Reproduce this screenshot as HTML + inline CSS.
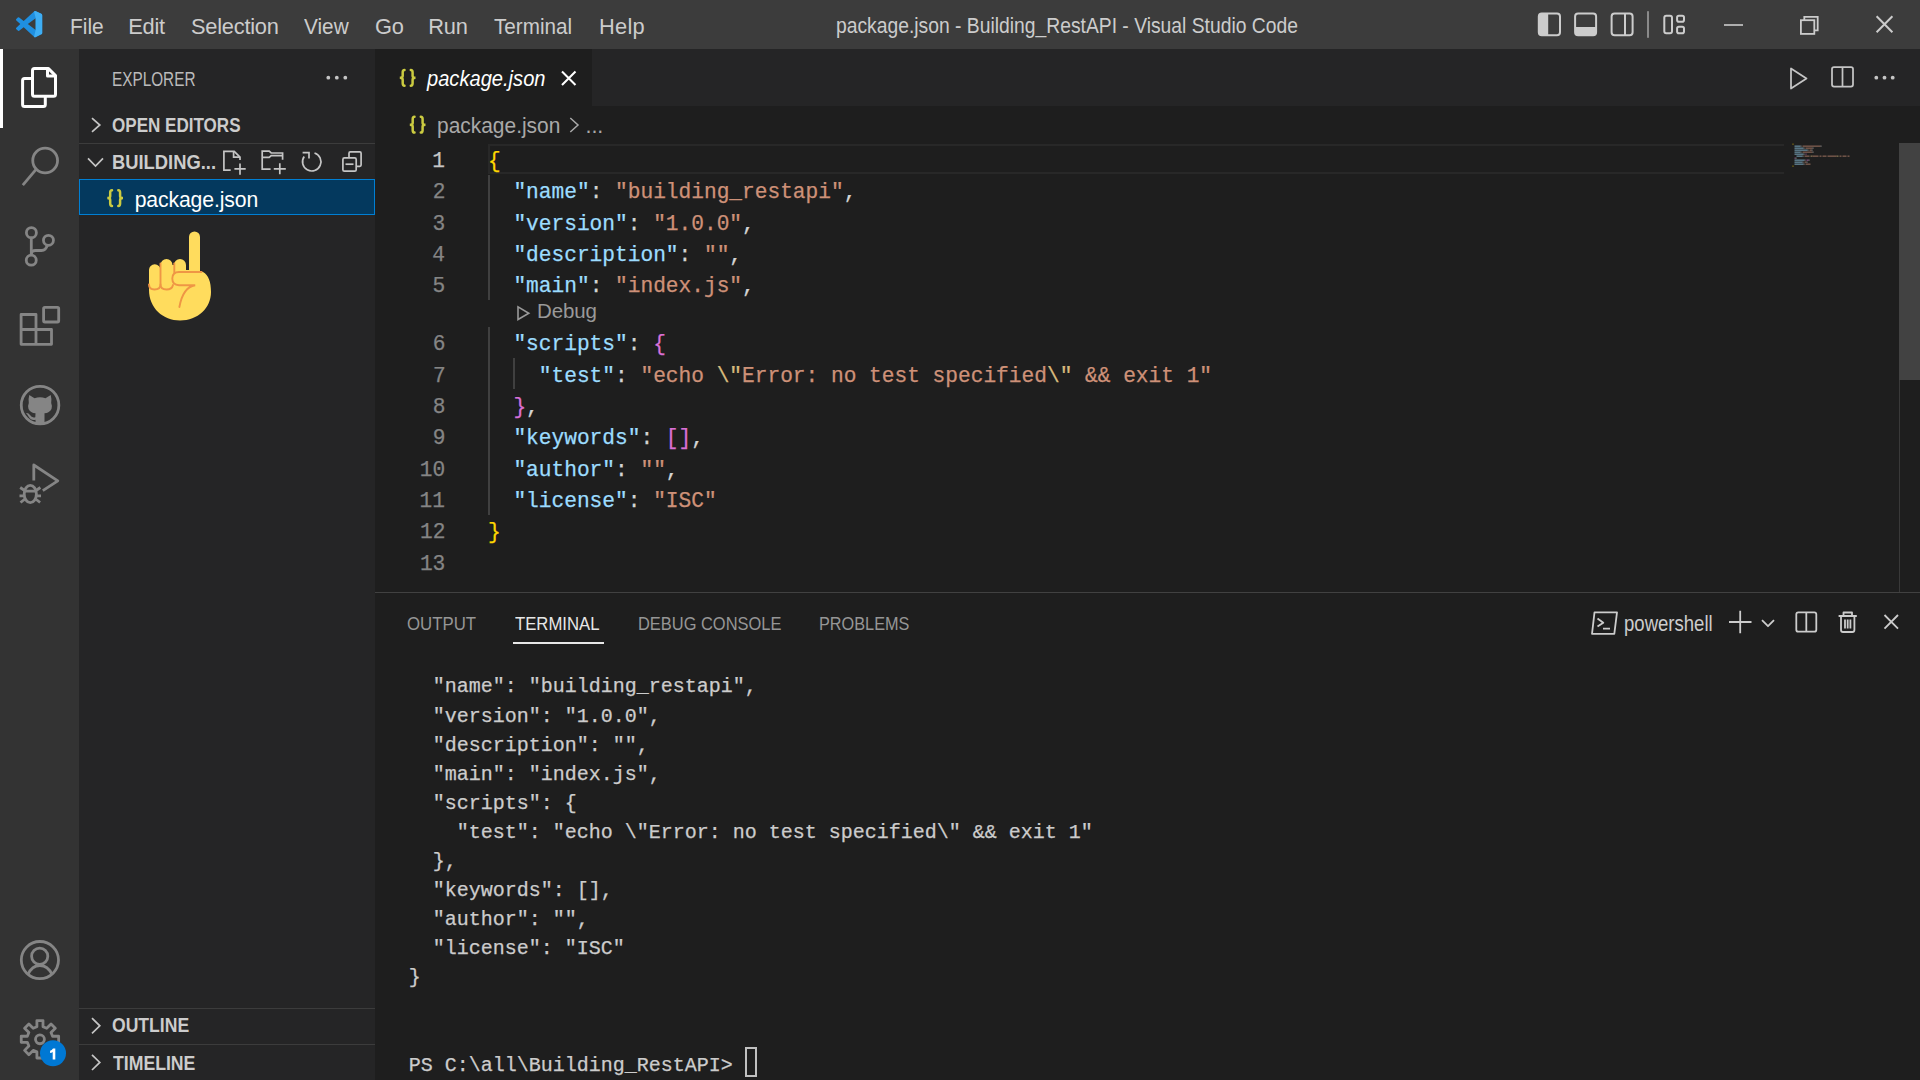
<!DOCTYPE html>
<html><head><meta charset="utf-8"><title>VS Code</title>
<style>
html,body{margin:0;padding:0;width:1920px;height:1080px;overflow:hidden;background:#1e1e1e;font-family:'Liberation Sans', sans-serif;}
</style></head><body>
<div style="position:absolute;left:0px;top:0px;width:1920px;height:49px;background:#3c3c3c;"></div>
<div style="position:absolute;left:0px;top:49px;width:79px;height:1031px;background:#333333;"></div>
<div style="position:absolute;left:79px;top:49px;width:296px;height:1031px;background:#252526;"></div>
<div style="position:absolute;left:375px;top:49px;width:1545px;height:57px;background:#252526;"></div>
<div style="position:absolute;left:375px;top:49px;width:217px;height:57px;background:#1e1e1e;"></div>
<div style="position:absolute;left:375px;top:106px;width:1545px;height:486px;background:#1e1e1e;"></div>
<div style="position:absolute;left:375px;top:592px;width:1545px;height:488px;background:#1e1e1e;"></div>
<div style="position:absolute;left:375px;top:592px;width:1545px;height:1px;background:#414141;"></div>
<div style="position:absolute;left:0px;top:49px;width:3px;height:79px;background:#ffffff;"></div>
<div style="position:absolute;left:79px;top:143px;width:296px;height:1px;background:#3c3c3c;"></div>
<div style="position:absolute;left:79px;top:1008px;width:296px;height:1px;background:#3c3c3c;"></div>
<div style="position:absolute;left:79px;top:1044px;width:296px;height:1px;background:#3c3c3c;"></div>
<div style="position:absolute;left:79px;top:179px;width:296px;height:36px;box-sizing:border-box;background:#04395e;border:1px solid #007fd4"></div>
<div style="position:absolute;left:488px;top:144px;width:1296px;height:30px;box-sizing:border-box;border:2px solid #282828;border-right:none"></div>
<div style="position:absolute;left:1899px;top:143px;width:1px;height:449px;background:#393939;"></div>
<div style="position:absolute;left:1899px;top:143px;width:21px;height:237px;background:#424242;"></div>
<div style="position:absolute;left:69.79px;top:12px;font-family:'Liberation Sans', sans-serif;font-size:21.8px;line-height:29px;letter-spacing:0.000px;color:#cccccc;white-space:pre;transform:scaleX(0.9577);transform-origin:0 0;">File</div>
<div style="position:absolute;left:128.21px;top:12px;font-family:'Liberation Sans', sans-serif;font-size:21.8px;line-height:29px;letter-spacing:-0.206px;color:#cccccc;white-space:pre;">Edit</div>
<div style="position:absolute;left:191.01px;top:12px;font-family:'Liberation Sans', sans-serif;font-size:21.8px;line-height:29px;letter-spacing:-0.222px;color:#cccccc;white-space:pre;">Selection</div>
<div style="position:absolute;left:304.41px;top:12px;font-family:'Liberation Sans', sans-serif;font-size:21.8px;line-height:29px;letter-spacing:0.000px;color:#cccccc;white-space:pre;transform:scaleX(0.9532);transform-origin:0 0;">View</div>
<div style="position:absolute;left:374.90px;top:12px;font-family:'Liberation Sans', sans-serif;font-size:21.8px;line-height:29px;letter-spacing:-0.069px;color:#cccccc;white-space:pre;">Go</div>
<div style="position:absolute;left:428.21px;top:12px;font-family:'Liberation Sans', sans-serif;font-size:21.8px;line-height:29px;letter-spacing:-0.144px;color:#cccccc;white-space:pre;">Run</div>
<div style="position:absolute;left:493.54px;top:12px;font-family:'Liberation Sans', sans-serif;font-size:21.8px;line-height:29px;letter-spacing:0.000px;color:#cccccc;white-space:pre;transform:scaleX(0.9475);transform-origin:0 0;">Terminal</div>
<div style="position:absolute;left:598.96px;top:12px;font-family:'Liberation Sans', sans-serif;font-size:21.8px;line-height:29px;letter-spacing:0.290px;color:#cccccc;white-space:pre;">Help</div>
<div style="position:absolute;left:836.46px;top:11px;font-family:'Liberation Sans', sans-serif;font-size:21.8px;line-height:29px;letter-spacing:0.000px;color:#cccccc;white-space:pre;transform:scaleX(0.8852);transform-origin:0 0;">package.json - Building_RestAPI - Visual Studio Code</div>
<div style="position:absolute;left:111.74px;top:66px;font-family:'Liberation Sans', sans-serif;font-size:19.6px;line-height:26px;letter-spacing:0.000px;color:#bbbbbb;white-space:pre;transform:scaleX(0.7819);transform-origin:0 0;">EXPLORER</div>
<div style="position:absolute;left:112.30px;top:112px;font-family:'Liberation Sans', sans-serif;font-size:20px;line-height:26px;letter-spacing:0.000px;color:#cccccc;white-space:pre;font-weight:bold;transform:scaleX(0.8527);transform-origin:0 0;">OPEN EDITORS</div>
<div style="position:absolute;left:111.77px;top:149px;font-family:'Liberation Sans', sans-serif;font-size:20px;line-height:26px;letter-spacing:0.000px;color:#cccccc;white-space:pre;font-weight:bold;transform:scaleX(0.9176);transform-origin:0 0;">BUILDING...</div>
<div style="position:absolute;left:134.63px;top:186px;font-family:'Liberation Sans', sans-serif;font-size:21.2px;line-height:28px;letter-spacing:-0.108px;color:#ffffff;white-space:pre;">package.json</div>
<div style="position:absolute;left:112.28px;top:1012px;font-family:'Liberation Sans', sans-serif;font-size:20px;line-height:26px;letter-spacing:0.000px;color:#cccccc;white-space:pre;font-weight:bold;transform:scaleX(0.8791);transform-origin:0 0;">OUTLINE</div>
<div style="position:absolute;left:112.80px;top:1050px;font-family:'Liberation Sans', sans-serif;font-size:20px;line-height:26px;letter-spacing:0.000px;color:#cccccc;white-space:pre;font-weight:bold;transform:scaleX(0.8828);transform-origin:0 0;">TIMELINE</div>
<div style="position:absolute;left:427.40px;top:64px;font-family:'Liberation Sans', sans-serif;font-size:21.8px;line-height:29px;letter-spacing:0.000px;color:#ffffff;white-space:pre;font-style:italic;transform:scaleX(0.9225);transform-origin:0 0;">package.json</div>
<div style="position:absolute;left:437.40px;top:112px;font-family:'Liberation Sans', sans-serif;font-size:21.5px;line-height:28px;letter-spacing:0.000px;color:#a9a9a9;white-space:pre;transform:scaleX(0.9736);transform-origin:0 0;">package.json</div>
<div style="position:absolute;left:585.54px;top:112px;font-family:'Liberation Sans', sans-serif;font-size:21.5px;line-height:28px;letter-spacing:-0.122px;color:#a9a9a9;white-space:pre;">...</div>
<div style="position:absolute;left:488.0px;top:147px;font-family:'Liberation Mono', monospace;font-size:21.2px;line-height:28px;letter-spacing:-0.012px;white-space:pre;-webkit-text-stroke:0.25px currentColor;"><span style="color:#ffd700">{</span></div>
<div style="position:absolute;left:432.3px;top:147px;font-family:'Liberation Mono', monospace;font-size:21.2px;line-height:28px;letter-spacing:-0.012px;white-space:pre;-webkit-text-stroke:0.25px currentColor;"><span style="color:#c6c6c6">1</span></div>
<div style="position:absolute;left:488.0px;top:178px;font-family:'Liberation Mono', monospace;font-size:21.2px;line-height:28px;letter-spacing:-0.012px;white-space:pre;-webkit-text-stroke:0.25px currentColor;"><span style="color:#d4d4d4">  </span><span style="color:#9cdcfe">&quot;name&quot;</span><span style="color:#d4d4d4">: </span><span style="color:#ce9178">&quot;building_restapi&quot;</span><span style="color:#d4d4d4">,</span></div>
<div style="position:absolute;left:432.78px;top:178px;font-family:'Liberation Mono', monospace;font-size:21.2px;line-height:28px;letter-spacing:-0.012px;white-space:pre;-webkit-text-stroke:0.25px currentColor;"><span style="color:#858585">2</span></div>
<div style="position:absolute;left:488.0px;top:210px;font-family:'Liberation Mono', monospace;font-size:21.2px;line-height:28px;letter-spacing:-0.012px;white-space:pre;-webkit-text-stroke:0.25px currentColor;"><span style="color:#d4d4d4">  </span><span style="color:#9cdcfe">&quot;version&quot;</span><span style="color:#d4d4d4">: </span><span style="color:#ce9178">&quot;1.0.0&quot;</span><span style="color:#d4d4d4">,</span></div>
<div style="position:absolute;left:432.62px;top:210px;font-family:'Liberation Mono', monospace;font-size:21.2px;line-height:28px;letter-spacing:-0.012px;white-space:pre;-webkit-text-stroke:0.25px currentColor;"><span style="color:#858585">3</span></div>
<div style="position:absolute;left:488.0px;top:241px;font-family:'Liberation Mono', monospace;font-size:21.2px;line-height:28px;letter-spacing:-0.012px;white-space:pre;-webkit-text-stroke:0.25px currentColor;"><span style="color:#d4d4d4">  </span><span style="color:#9cdcfe">&quot;description&quot;</span><span style="color:#d4d4d4">: </span><span style="color:#ce9178">&quot;&quot;</span><span style="color:#d4d4d4">,</span></div>
<div style="position:absolute;left:432.35px;top:241px;font-family:'Liberation Mono', monospace;font-size:21.2px;line-height:28px;letter-spacing:-0.012px;white-space:pre;-webkit-text-stroke:0.25px currentColor;"><span style="color:#858585">4</span></div>
<div style="position:absolute;left:488.0px;top:272px;font-family:'Liberation Mono', monospace;font-size:21.2px;line-height:28px;letter-spacing:-0.012px;white-space:pre;-webkit-text-stroke:0.25px currentColor;"><span style="color:#d4d4d4">  </span><span style="color:#9cdcfe">&quot;main&quot;</span><span style="color:#d4d4d4">: </span><span style="color:#ce9178">&quot;index.js&quot;</span><span style="color:#d4d4d4">,</span></div>
<div style="position:absolute;left:432.62px;top:272px;font-family:'Liberation Mono', monospace;font-size:21.2px;line-height:28px;letter-spacing:-0.012px;white-space:pre;-webkit-text-stroke:0.25px currentColor;"><span style="color:#858585">5</span></div>
<div style="position:absolute;left:488.0px;top:330px;font-family:'Liberation Mono', monospace;font-size:21.2px;line-height:28px;letter-spacing:-0.012px;white-space:pre;-webkit-text-stroke:0.25px currentColor;"><span style="color:#d4d4d4">  </span><span style="color:#9cdcfe">&quot;scripts&quot;</span><span style="color:#d4d4d4">: </span><span style="color:#da70d6">{</span></div>
<div style="position:absolute;left:432.65px;top:330px;font-family:'Liberation Mono', monospace;font-size:21.2px;line-height:28px;letter-spacing:-0.012px;white-space:pre;-webkit-text-stroke:0.25px currentColor;"><span style="color:#858585">6</span></div>
<div style="position:absolute;left:488.0px;top:362px;font-family:'Liberation Mono', monospace;font-size:21.2px;line-height:28px;letter-spacing:-0.012px;white-space:pre;-webkit-text-stroke:0.25px currentColor;"><span style="color:#d4d4d4">    </span><span style="color:#9cdcfe">&quot;test&quot;</span><span style="color:#d4d4d4">: </span><span style="color:#ce9178">&quot;echo </span><span style="color:#d7ba7d">\&quot;</span><span style="color:#ce9178">Error: no test specified</span><span style="color:#d7ba7d">\&quot;</span><span style="color:#ce9178"> &amp;&amp; exit 1&quot;</span></div>
<div style="position:absolute;left:432.93px;top:362px;font-family:'Liberation Mono', monospace;font-size:21.2px;line-height:28px;letter-spacing:-0.012px;white-space:pre;-webkit-text-stroke:0.25px currentColor;"><span style="color:#858585">7</span></div>
<div style="position:absolute;left:488.0px;top:393px;font-family:'Liberation Mono', monospace;font-size:21.2px;line-height:28px;letter-spacing:-0.012px;white-space:pre;-webkit-text-stroke:0.25px currentColor;"><span style="color:#d4d4d4">  </span><span style="color:#da70d6">}</span><span style="color:#d4d4d4">,</span></div>
<div style="position:absolute;left:432.68px;top:393px;font-family:'Liberation Mono', monospace;font-size:21.2px;line-height:28px;letter-spacing:-0.012px;white-space:pre;-webkit-text-stroke:0.25px currentColor;"><span style="color:#858585">8</span></div>
<div style="position:absolute;left:488.0px;top:424px;font-family:'Liberation Mono', monospace;font-size:21.2px;line-height:28px;letter-spacing:-0.012px;white-space:pre;-webkit-text-stroke:0.25px currentColor;"><span style="color:#d4d4d4">  </span><span style="color:#9cdcfe">&quot;keywords&quot;</span><span style="color:#d4d4d4">: </span><span style="color:#da70d6">[]</span><span style="color:#d4d4d4">,</span></div>
<div style="position:absolute;left:432.75px;top:424px;font-family:'Liberation Mono', monospace;font-size:21.2px;line-height:28px;letter-spacing:-0.012px;white-space:pre;-webkit-text-stroke:0.25px currentColor;"><span style="color:#858585">9</span></div>
<div style="position:absolute;left:488.0px;top:456px;font-family:'Liberation Mono', monospace;font-size:21.2px;line-height:28px;letter-spacing:-0.012px;white-space:pre;-webkit-text-stroke:0.25px currentColor;"><span style="color:#d4d4d4">  </span><span style="color:#9cdcfe">&quot;author&quot;</span><span style="color:#d4d4d4">: </span><span style="color:#ce9178">&quot;&quot;</span><span style="color:#d4d4d4">,</span></div>
<div style="position:absolute;left:419.87px;top:456px;font-family:'Liberation Mono', monospace;font-size:21.2px;line-height:28px;letter-spacing:-0.012px;white-space:pre;-webkit-text-stroke:0.25px currentColor;"><span style="color:#858585">10</span></div>
<div style="position:absolute;left:488.0px;top:487px;font-family:'Liberation Mono', monospace;font-size:21.2px;line-height:28px;letter-spacing:-0.012px;white-space:pre;-webkit-text-stroke:0.25px currentColor;"><span style="color:#d4d4d4">  </span><span style="color:#9cdcfe">&quot;license&quot;</span><span style="color:#d4d4d4">: </span><span style="color:#ce9178">&quot;ISC&quot;</span></div>
<div style="position:absolute;left:419.59px;top:487px;font-family:'Liberation Mono', monospace;font-size:21.2px;line-height:28px;letter-spacing:-0.012px;white-space:pre;-webkit-text-stroke:0.25px currentColor;"><span style="color:#858585">11</span></div>
<div style="position:absolute;left:488.0px;top:518px;font-family:'Liberation Mono', monospace;font-size:21.2px;line-height:28px;letter-spacing:-0.012px;white-space:pre;-webkit-text-stroke:0.25px currentColor;"><span style="color:#ffd700">}</span></div>
<div style="position:absolute;left:420.07px;top:518px;font-family:'Liberation Mono', monospace;font-size:21.2px;line-height:28px;letter-spacing:-0.012px;white-space:pre;-webkit-text-stroke:0.25px currentColor;"><span style="color:#858585">12</span></div>
<div style="position:absolute;left:419.91px;top:550px;font-family:'Liberation Mono', monospace;font-size:21.2px;line-height:28px;letter-spacing:-0.012px;white-space:pre;-webkit-text-stroke:0.25px currentColor;"><span style="color:#858585">13</span></div>
<svg width="1920" height="1080" style="position:absolute;left:0;top:0;opacity:0.45"><rect x="1792.5" y="143.4" width="1" height="1.6" fill="#ffd700"/><rect x="1794.5" y="145.4" width="6" height="1.6" fill="#9cdcfe"/><rect x="1800.5" y="145.4" width="1" height="1.6" fill="#d4d4d4"/><rect x="1802.5" y="145.4" width="18" height="1.6" fill="#ce9178"/><rect x="1820.5" y="145.4" width="1" height="1.6" fill="#d4d4d4"/><rect x="1794.5" y="147.4" width="9" height="1.6" fill="#9cdcfe"/><rect x="1803.5" y="147.4" width="1" height="1.6" fill="#d4d4d4"/><rect x="1805.5" y="147.4" width="7" height="1.6" fill="#ce9178"/><rect x="1812.5" y="147.4" width="1" height="1.6" fill="#d4d4d4"/><rect x="1794.5" y="149.4" width="13" height="1.6" fill="#9cdcfe"/><rect x="1807.5" y="149.4" width="1" height="1.6" fill="#d4d4d4"/><rect x="1809.5" y="149.4" width="2" height="1.6" fill="#ce9178"/><rect x="1811.5" y="149.4" width="1" height="1.6" fill="#d4d4d4"/><rect x="1794.5" y="151.4" width="6" height="1.6" fill="#9cdcfe"/><rect x="1800.5" y="151.4" width="1" height="1.6" fill="#d4d4d4"/><rect x="1802.5" y="151.4" width="10" height="1.6" fill="#ce9178"/><rect x="1812.5" y="151.4" width="1" height="1.6" fill="#d4d4d4"/><rect x="1794.5" y="153.4" width="9" height="1.6" fill="#9cdcfe"/><rect x="1803.5" y="153.4" width="1" height="1.6" fill="#d4d4d4"/><rect x="1805.5" y="153.4" width="1" height="1.6" fill="#da70d6"/><rect x="1796.5" y="155.4" width="6" height="1.6" fill="#9cdcfe"/><rect x="1802.5" y="155.4" width="1" height="1.6" fill="#d4d4d4"/><rect x="1804.5" y="155.4" width="5" height="1.6" fill="#ce9178"/><rect x="1810.5" y="155.4" width="2" height="1.6" fill="#d7ba7d"/><rect x="1812.5" y="155.4" width="6" height="1.6" fill="#ce9178"/><rect x="1819.5" y="155.4" width="2" height="1.6" fill="#ce9178"/><rect x="1822.5" y="155.4" width="4" height="1.6" fill="#ce9178"/><rect x="1827.5" y="155.4" width="9" height="1.6" fill="#ce9178"/><rect x="1836.5" y="155.4" width="2" height="1.6" fill="#d7ba7d"/><rect x="1839.5" y="155.4" width="2" height="1.6" fill="#ce9178"/><rect x="1842.5" y="155.4" width="4" height="1.6" fill="#ce9178"/><rect x="1847.5" y="155.4" width="2" height="1.6" fill="#ce9178"/><rect x="1794.5" y="157.4" width="1" height="1.6" fill="#da70d6"/><rect x="1795.5" y="157.4" width="1" height="1.6" fill="#d4d4d4"/><rect x="1794.5" y="159.4" width="10" height="1.6" fill="#9cdcfe"/><rect x="1804.5" y="159.4" width="1" height="1.6" fill="#d4d4d4"/><rect x="1806.5" y="159.4" width="2" height="1.6" fill="#da70d6"/><rect x="1808.5" y="159.4" width="1" height="1.6" fill="#d4d4d4"/><rect x="1794.5" y="161.4" width="8" height="1.6" fill="#9cdcfe"/><rect x="1802.5" y="161.4" width="1" height="1.6" fill="#d4d4d4"/><rect x="1804.5" y="161.4" width="2" height="1.6" fill="#ce9178"/><rect x="1806.5" y="161.4" width="1" height="1.6" fill="#d4d4d4"/><rect x="1794.5" y="163.4" width="9" height="1.6" fill="#9cdcfe"/><rect x="1803.5" y="163.4" width="1" height="1.6" fill="#d4d4d4"/><rect x="1805.5" y="163.4" width="5" height="1.6" fill="#ce9178"/><rect x="1792.5" y="165.4" width="1" height="1.6" fill="#ffd700"/></svg>
<div style="position:absolute;left:488px;top:175px;width:1.5px;height:125px;background:#404040;"></div>
<div style="position:absolute;left:488px;top:327px;width:1.5px;height:188px;background:#404040;"></div>
<div style="position:absolute;left:513px;top:358px;width:1.5px;height:31px;background:#404040;"></div>
<div style="position:absolute;left:537.07px;top:297px;font-family:'Liberation Sans', sans-serif;font-size:20.5px;line-height:27px;letter-spacing:-0.164px;color:#999999;white-space:pre;">Debug</div>
<div style="position:absolute;left:406.90px;top:611px;font-family:'Liberation Sans', sans-serif;font-size:19.2px;line-height:25px;letter-spacing:0.000px;color:#969696;white-space:pre;transform:scaleX(0.8752);transform-origin:0 0;">OUTPUT</div>
<div style="position:absolute;left:515.22px;top:611px;font-family:'Liberation Sans', sans-serif;font-size:19.2px;line-height:25px;letter-spacing:0.000px;color:#e7e7e7;white-space:pre;transform:scaleX(0.8707);transform-origin:0 0;">TERMINAL</div>
<div style="position:absolute;left:638.15px;top:611px;font-family:'Liberation Sans', sans-serif;font-size:19.2px;line-height:25px;letter-spacing:0.000px;color:#969696;white-space:pre;transform:scaleX(0.8564);transform-origin:0 0;">DEBUG CONSOLE</div>
<div style="position:absolute;left:819.46px;top:611px;font-family:'Liberation Sans', sans-serif;font-size:19.2px;line-height:25px;letter-spacing:0.000px;color:#969696;white-space:pre;transform:scaleX(0.8480);transform-origin:0 0;">PROBLEMS</div>
<div style="position:absolute;left:513px;top:642px;width:91px;height:2px;background:#e7e7e7;"></div>
<div style="position:absolute;left:1623.80px;top:610px;font-family:'Liberation Sans', sans-serif;font-size:21.2px;line-height:28px;letter-spacing:0.000px;color:#cccccc;white-space:pre;transform:scaleX(0.8756);transform-origin:0 0;">powershell</div>
<div style="position:absolute;left:408.8px;top:674px;font-family:'Liberation Mono', monospace;font-size:20px;line-height:26px;letter-spacing:-0.002px;white-space:pre;-webkit-text-stroke:0.25px currentColor;"><span style="color:#cccccc">  &quot;name&quot;: &quot;building_restapi&quot;,</span></div>
<div style="position:absolute;left:408.8px;top:704px;font-family:'Liberation Mono', monospace;font-size:20px;line-height:26px;letter-spacing:-0.002px;white-space:pre;-webkit-text-stroke:0.25px currentColor;"><span style="color:#cccccc">  &quot;version&quot;: &quot;1.0.0&quot;,</span></div>
<div style="position:absolute;left:408.8px;top:733px;font-family:'Liberation Mono', monospace;font-size:20px;line-height:26px;letter-spacing:-0.002px;white-space:pre;-webkit-text-stroke:0.25px currentColor;"><span style="color:#cccccc">  &quot;description&quot;: &quot;&quot;,</span></div>
<div style="position:absolute;left:408.8px;top:762px;font-family:'Liberation Mono', monospace;font-size:20px;line-height:26px;letter-spacing:-0.002px;white-space:pre;-webkit-text-stroke:0.25px currentColor;"><span style="color:#cccccc">  &quot;main&quot;: &quot;index.js&quot;,</span></div>
<div style="position:absolute;left:408.8px;top:791px;font-family:'Liberation Mono', monospace;font-size:20px;line-height:26px;letter-spacing:-0.002px;white-space:pre;-webkit-text-stroke:0.25px currentColor;"><span style="color:#cccccc">  &quot;scripts&quot;: {</span></div>
<div style="position:absolute;left:408.8px;top:820px;font-family:'Liberation Mono', monospace;font-size:20px;line-height:26px;letter-spacing:-0.002px;white-space:pre;-webkit-text-stroke:0.25px currentColor;"><span style="color:#cccccc">    &quot;test&quot;: &quot;echo \&quot;Error: no test specified\&quot; &amp;&amp; exit 1&quot;</span></div>
<div style="position:absolute;left:408.8px;top:849px;font-family:'Liberation Mono', monospace;font-size:20px;line-height:26px;letter-spacing:-0.002px;white-space:pre;-webkit-text-stroke:0.25px currentColor;"><span style="color:#cccccc">  },</span></div>
<div style="position:absolute;left:408.8px;top:878px;font-family:'Liberation Mono', monospace;font-size:20px;line-height:26px;letter-spacing:-0.002px;white-space:pre;-webkit-text-stroke:0.25px currentColor;"><span style="color:#cccccc">  &quot;keywords&quot;: [],</span></div>
<div style="position:absolute;left:408.8px;top:907px;font-family:'Liberation Mono', monospace;font-size:20px;line-height:26px;letter-spacing:-0.002px;white-space:pre;-webkit-text-stroke:0.25px currentColor;"><span style="color:#cccccc">  &quot;author&quot;: &quot;&quot;,</span></div>
<div style="position:absolute;left:408.8px;top:936px;font-family:'Liberation Mono', monospace;font-size:20px;line-height:26px;letter-spacing:-0.002px;white-space:pre;-webkit-text-stroke:0.25px currentColor;"><span style="color:#cccccc">  &quot;license&quot;: &quot;ISC&quot;</span></div>
<div style="position:absolute;left:408.8px;top:965px;font-family:'Liberation Mono', monospace;font-size:20px;line-height:26px;letter-spacing:-0.002px;white-space:pre;-webkit-text-stroke:0.25px currentColor;"><span style="color:#cccccc">}</span></div>
<div style="position:absolute;left:408.8px;top:1053px;font-family:'Liberation Mono', monospace;font-size:20px;line-height:26px;letter-spacing:-0.002px;white-space:pre;-webkit-text-stroke:0.25px currentColor;"><span style="color:#cccccc">PS C:\all\Building_RestAPI&gt; </span></div>
<div style="position:absolute;left:745px;top:1047px;width:12px;height:30px;box-sizing:border-box;border:2px solid #c0c0c0"></div>
<svg width="1920" height="1080" style="position:absolute;left:0;top:0">
<defs>
<linearGradient id="lg" x1="0" y1="0" x2="1" y2="1"><stop offset="0" stop-color="#3cb1f5"/><stop offset="1" stop-color="#1a8ad8"/></linearGradient>
</defs>
<!-- VS Code logo: box 16..42 x 11..37.5 -->
<g transform="translate(16,11) scale(0.262)">
<path fill="#1f8fe0" d="M96.46 10.8L75.86.87a6.23 6.23 0 0 0-7.11 1.21L29.3 38.06 12.12 25a4.16 4.16 0 0 0-5.32.24L1.29 30.25a4.16 4.16 0 0 0 0 6.16L16.2 50 1.28 63.59a4.16 4.16 0 0 0 0 6.16l5.52 5.01a4.16 4.16 0 0 0 5.32.24l17.18-13.06 39.45 35.98a6.23 6.23 0 0 0 7.11 1.21l20.6-9.92A6.24 6.24 0 0 0 100 83.6V16.4a6.24 6.24 0 0 0-3.54-5.6zM75.02 72.7L45.1 50l29.92-22.7v45.4z"/>
<path fill="#3eaef4" d="M75.86.87a6.23 6.23 0 0 0-7.11 1.21L75.02 27.3v45.4l-6.27 25.22a6.23 6.23 0 0 0 7.11 1.21l20.6-9.92A6.24 6.24 0 0 0 100 83.6V16.4a6.24 6.24 0 0 0-3.54-5.6z"/>
</g>

<!-- activity bar icons -->
<g fill="none" stroke-linejoin="round" stroke-linecap="butt">
<!-- explorer (active, white) -->
<g stroke="#ffffff" stroke-width="3">
<path d="M55.5 75.6 V94.2 Q55.5 96.2 53.5 96.2 H34.5 Q32.5 96.2 32.5 94.2 V70.6 Q32.5 68.6 34.5 68.6 H48.5 Z"/>
<path d="M47.5 68.6 V76 H55.5"/>
<path d="M32.5 78.5 H24.6 Q22.6 78.5 22.6 80.5 V104.4 Q22.6 106.4 24.6 106.4 H43.3 Q45.3 106.4 45.3 104.4 V96.2"/>
</g>
<g stroke="#858585" stroke-width="2.8">
<!-- search -->
<circle cx="45.15" cy="160.45" r="12.4"/>
<path d="M36.3 169.2 L22.8 185.2"/>
<!-- scm -->
<circle cx="31.4" cy="232.65" r="5"/>
<circle cx="48.45" cy="240.3" r="5"/>
<circle cx="31.25" cy="260.2" r="5"/>
<path d="M31.3 237.6 V255.2"/>
<path d="M31.3 254 Q31.3 250.5 35.5 250.5 H41.5 Q46 250.5 47.3 245.2"/>
<!-- extensions -->
<rect x="43.6" y="307.3" width="15.1" height="14.7" rx="1.2"/>
<path d="M21.1 314.5 H36 V329.5 H51.5 V344.3 H21.1 Z"/>
<path d="M21.1 329.5 H36 V344.3"/>
<!-- github -->
<circle cx="40.05" cy="405.15" r="18.8"/>
<!-- debug -->
<path d="M33.8 480.5 V465 L57.8 480.8 L42.8 490.6"/>
<ellipse cx="30.3" cy="494" rx="6.1" ry="8.6"/>
<path d="M24.2 491.2 H36.4 M20.2 487.5 L24.6 490.5 M40.4 487.5 L36 490.5 M19.5 495.8 H24.3 M36.3 495.8 H41 M20.5 502.5 L25 499 M40.1 502.5 L35.6 499"/>
<!-- account -->
<circle cx="39.9" cy="960.1" r="18.6"/>
<circle cx="39.7" cy="956.25" r="8.1"/>
<path d="M28 974.5 Q32 965.5 39.9 965.5 Q47.8 965.5 52 974.5"/>
</g>
<!-- gear -->
<path stroke="#858585" stroke-width="2.8" d="M36.90 1026.70 L36.90 1020.60 L43.00 1020.60 L43.00 1026.70 L46.70 1028.23 L51.02 1023.92 L55.33 1028.23 L51.02 1032.55 L52.55 1036.25 L58.65 1036.25 L58.65 1042.35 L52.55 1042.35 L51.02 1046.05 L55.33 1050.37 L51.02 1054.68 L46.70 1050.37 L43.00 1051.90 L43.00 1058.00 L36.90 1058.00 L36.90 1051.90 L33.20 1050.37 L28.88 1054.68 L24.57 1050.37 L28.88 1046.05 L27.35 1042.35 L21.25 1042.35 L21.25 1036.25 L27.35 1036.25 L28.88 1032.55 L24.57 1028.23 L28.88 1023.92 L33.20 1028.23 Z"/>
<circle stroke="#858585" stroke-width="2.8" cx="39.95" cy="1039.3" r="4.45"/>
</g>
<!-- github octocat -->
<path fill="#858585" d="M29.3 395 L34.5 398.2 Q40 396.2 45.5 398.2 L50.7 395 Q52 399.5 51.2 403 Q52.5 406 51.5 409 Q49.5 413 44.5 413.3 V424.5 Q40 425.3 35.5 424.5 V419.8 Q31 421 28.5 416.5 Q27.3 414 26 413 Q28.5 412.6 30 415 Q32 418.3 35.3 417.2 L35.5 413.3 Q30.5 413 28.5 409 Q27.5 406 28.8 403 Q28 399.5 29.3 395 Z"/>
<!-- badge -->
<circle cx="53" cy="1053.25" r="13" fill="#0078d4"/>
<path fill="#ffffff" d="M53 1048.4 H55.3 V1059.6 H52.7 V1051.9 Q51.6 1052.7 50.1 1053 V1050.8 Q52 1050.2 53 1048.4 Z"/>

<!-- title bar right icons -->
<g fill="none" stroke="#cccccc" stroke-width="2">
<rect x="1538.8" y="13.5" width="21.2" height="21.7" rx="3"/>
<rect x="1575.1" y="13.5" width="21" height="21.7" rx="3"/>
<rect x="1611.6" y="13.5" width="21" height="21.7" rx="3"/>
<path d="M1625 13.5 V35.2"/>
<rect x="1664.3" y="15.7" width="7.7" height="17.5" rx="2"/>
<rect x="1677.1" y="15.7" width="6.9" height="6" rx="1.8"/>
<rect x="1677.1" y="26.8" width="6.9" height="6.4" rx="1.8"/>
</g>
<path fill="#cccccc" d="M1538.8 16.5 Q1538.8 13.5 1541.8 13.5 H1548.2 V35.2 H1541.8 Q1538.8 35.2 1538.8 32.2 Z"/>
<path fill="#cccccc" d="M1575.1 27.1 H1596.1 V32.2 Q1596.1 35.2 1593.1 35.2 H1578.1 Q1575.1 35.2 1575.1 32.2 Z"/>
<rect x="1647" y="11.2" width="2" height="26.6" fill="#8a8a8a"/>
<g fill="none" stroke="#cccccc" stroke-width="1.6">
<path d="M1724 25 H1743"/>
<rect x="1800.9" y="20.2" width="13.4" height="13.7" stroke-width="1.8"/>
<path d="M1804.3 20.2 V16.8 H1817.7 V30.3 H1814.3" stroke-width="1.8"/>
<path d="M1876.6 16.3 L1892.4 32.2 M1892.4 16.3 L1876.6 32.2" stroke-width="2"/>
</g>

<!-- editor actions -->
<g fill="none" stroke="#c5c5c5" stroke-width="1.75" stroke-linejoin="round">
<path d="M1791 68.5 V88.5 L1806.5 78.5 Z"/>
<rect x="1832" y="67" width="21" height="19.5" rx="2"/>
<path d="M1842.5 67 V86.5"/>
</g>
<g fill="#c5c5c5">
<circle cx="1876.3" cy="77.7" r="1.9"/><circle cx="1884.5" cy="77.7" r="1.9"/><circle cx="1892.7" cy="77.7" r="1.9"/>
<circle cx="328.3" cy="77.7" r="1.9"/><circle cx="336.8" cy="77.7" r="1.9"/><circle cx="345.3" cy="77.7" r="1.9"/>
</g>

<!-- sidebar chevrons & actions -->
<g fill="none" stroke="#c5c5c5" stroke-width="1.7" stroke-linejoin="miter">
<path d="M92 118.2 L99.8 125 L92 131.8"/>
<path d="M88 158.3 L95.5 166 L103 158.3"/>
<path d="M92 1018.2 L99.8 1025.8 L92 1033.4"/>
<path d="M92 1054.8 L99.8 1062.4 L92 1070"/>
<!-- new file -->
<path d="M230.7 170.2 H223.9 V151.4 H234.2 L240 157.2 V160"/>
<path d="M233.6 151.4 V157.2 H240"/>
<path d="M234.4 168.8 H245.7 M240 163.4 V174.7"/>
<!-- new folder -->
<path d="M270.6 169.2 H262.2 V151.2 H269.2 L271.2 153 H282.6 V159.7"/>
<path d="M262.2 157.3 H269.2 L271.2 155.6 H282.6"/>
<path d="M273.8 168.8 H285.8 M279.8 163.2 V174.3"/>
<!-- refresh -->
<path d="M314.5 153 A9.2 9.2 0 1 1 304.2 156.5"/>
<path d="M302.6 152.7 H309 V158.6" stroke-linejoin="miter"/>
<!-- collapse all -->
<path d="M349 157.1 V153.2 Q349 151.9 350.3 151.9 H359.8 Q361.1 151.9 361.1 153.2 V165.1 Q361.1 166.4 359.8 166.4 H356.2"/>
<rect x="342.9" y="157.9" width="13.3" height="13.3" rx="1.5"/>
<path d="M345.5 164.2 H353.5"/>
<!-- breadcrumb chevron -->
<path d="M570.3 118 L578 125 L570.3 132" stroke="#a9a9a9" stroke-width="1.5"/>
<!-- tab close -->
<path d="M562 71.5 L575.5 85 M575.5 71.5 L562 85" stroke="#ffffff" stroke-width="2.1"/>
<!-- codelens triangle -->
<path d="M518 306.8 V319.5 L528.8 313.2 Z" stroke="#999999" stroke-width="1.6"/>
</g>

<!-- json icons -->
<g fill="none" stroke="#cbcb41" stroke-width="2.5" stroke-linecap="round" stroke-linejoin="miter">
<g transform="translate(398.5,68.75)">
<path d="M6.0 1.2 Q4.2 1.2 4.2 3.6 V7.3 Q4.2 9.1 1.3 9.1 Q4.2 9.1 4.2 10.9 V14.6 Q4.2 17.0 6.0 17.0"/>
<path d="M12.3 1.2 Q14.1 1.2 14.1 3.6 V7.3 Q14.1 9.1 17.0 9.1 Q14.1 9.1 14.1 10.9 V14.6 Q14.1 17.0 12.3 17.0"/>
</g>
<g transform="translate(408.5,115.6)">
<path d="M6.0 1.2 Q4.2 1.2 4.2 3.6 V7.3 Q4.2 9.1 1.3 9.1 Q4.2 9.1 4.2 10.9 V14.6 Q4.2 17.0 6.0 17.0"/>
<path d="M12.3 1.2 Q14.1 1.2 14.1 3.6 V7.3 Q14.1 9.1 17.0 9.1 Q14.1 9.1 14.1 10.9 V14.6 Q14.1 17.0 12.3 17.0"/>
</g>
<g transform="translate(106,189)">
<path d="M6.0 1.2 Q4.2 1.2 4.2 3.6 V7.3 Q4.2 9.1 1.3 9.1 Q4.2 9.1 4.2 10.9 V14.6 Q4.2 17.0 6.0 17.0"/>
<path d="M12.3 1.2 Q14.1 1.2 14.1 3.6 V7.3 Q14.1 9.1 17.0 9.1 Q14.1 9.1 14.1 10.9 V14.6 Q14.1 17.0 12.3 17.0"/>
</g>
</g>

<!-- panel actions -->
<g fill="none" stroke="#cccccc" stroke-width="1.8" stroke-linejoin="round">
<path d="M1594.5 612.3 H1617 L1614.3 633.8 H1592 Z"/>
<path d="M1597.5 618.5 L1603.3 622.7 L1597.5 626.5 M1603 628.6 H1610"/>
<path d="M1729 622 H1751.5 M1740.2 610.8 V633.2"/>
<path d="M1762 620.2 L1768 626.2 L1774 620.2"/>
<rect x="1796.3" y="612.3" width="20" height="19.4" rx="2"/>
<path d="M1806.3 612.3 V631.7"/>
<path d="M1838.6 616 H1856.8 M1843.5 616 V612.5 H1852 V616 M1841 616 V630 Q1841 632 1843 632 H1852.4 Q1854.4 632 1854.4 630 V616 M1845 619.5 V628.5 M1847.7 619.5 V628.5 M1850.4 619.5 V628.5"/>
<path d="M1884.5 615 L1898 628.7 M1898 615 L1884.5 628.7"/>
</g>


<!-- hand emoji -->
<g transform="translate(130,220)">
<path fill="#FFDC5D" d="M19 50 V70 C19 88 33 100.5 50 100.5 C68 100.5 81 88 81 72 C81 62 78.5 55 73 52 L70 51 V17 A5.5 5.5 0 0 0 59 17 V50 L56 50 V45 A6 6 0 0 0 44 45 L42.5 45 A6 6 0 0 0 30.5 45 V50 A5.5 5.5 0 0 0 19 50 Z"/>
<g fill="none" stroke="#EF9645" stroke-width="1.9" stroke-linecap="round">
<path d="M19 64.5 Q19 69.5 24.5 69.5 Q30.5 69.5 30.5 64.5"/>
<path d="M30.5 43.5 V64.5 Q30.5 69.5 36.5 69.5 Q42 69.5 43 65"/>
<path d="M44.3 43.5 V52.5"/>
<path d="M71.5 52 H49 Q42.3 52 42.3 58.6 Q42.3 65.2 49 65.2 H65.2 Q53 67 49.4 87"/>
</g>
</g>
</svg>

</body></html>
